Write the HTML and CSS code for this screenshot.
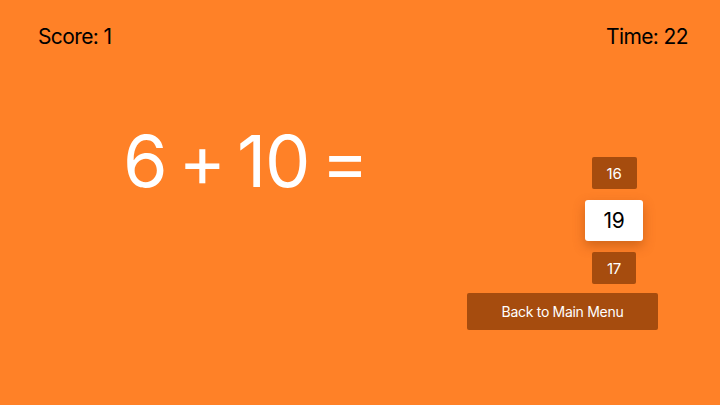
FILE: index.html
```html
<!DOCTYPE html>
<html>
<head>
<meta charset="utf-8">
<link rel="stylesheet" href="styles.css">
</head>
<body>
<div class="screen">
  <header class="topbar">
    <div class="stat">Score: 1</div>
    <div class="stat">Time: 22</div>
  </header>
  <main class="game">
    <div class="equation">6 + 10 =</div>
    <div class="side">
      <div class="answers">
        <button class="answer">16</button>
        <button class="answer selected">19</button>
        <button class="answer narrow">17</button>
      </div>
      <button class="menu-btn">Back to Main Menu</button>
    </div>
  </main>
</div>
</body>
</html>
```
FILE: styles.css
```css
* { box-sizing: border-box; }
html, body {
  margin: 0;
  padding: 0;
  width: 720px;
  height: 405px;
  overflow: hidden;
}
body {
  background: #ff8127;
  font-family: Inter, "Noto Sans", sans-serif;
}
.screen {
  width: 720px;
  height: 405px;
  display: flex;
  flex-direction: column;
}
.topbar {
  display: flex;
  justify-content: space-between;
  padding: 24px 32px 0 38px;
}
.stat {
  font-size: 21px;
  line-height: 26px;
  color: #000;
  letter-spacing: -0.6px;
}
.game {
  display: flex;
  justify-content: space-between;
  align-items: flex-start;
}
.equation {
  margin: 71px 0 0 123px;
  font-size: 72px;
  line-height: 80px;
  color: #fff;
  letter-spacing: -1.2px;
  word-spacing: -7px;
  font-weight: 400;
}
.side {
  margin: 107px 62px 0 0;
  display: flex;
  flex-direction: column;
  align-items: flex-end;
}
.answers {
  display: flex;
  flex-direction: column;
  align-items: center;
  width: 58px;
  margin-right: 15px;
  gap: 11px;
}
button {
  font-family: Inter, "Noto Sans", sans-serif;
  border: none;
  margin: 0;
  padding: 0;
  cursor: pointer;
}
.answer {
  width: 45px;
  height: 32px;
  background: #a64c0e;
  color: #fff;
  font-size: 15px;
  letter-spacing: -0.3px;
  border-radius: 2px;
}
.answer.narrow { width: 44px; }
.answer.selected {
  width: 58px;
  height: 41px;
  background: #fff;
  color: #000;
  font-size: 21px;
  border-radius: 3px;
  box-shadow: 0 5px 12px rgba(120, 50, 0, 0.35);
}
.menu-btn {
  margin-top: 9px;
  width: 191px;
  height: 37px;
  background: #a64c0e;
  color: #fff;
  font-size: 14px;
  letter-spacing: -0.3px;
  border-radius: 2px;
}
```
